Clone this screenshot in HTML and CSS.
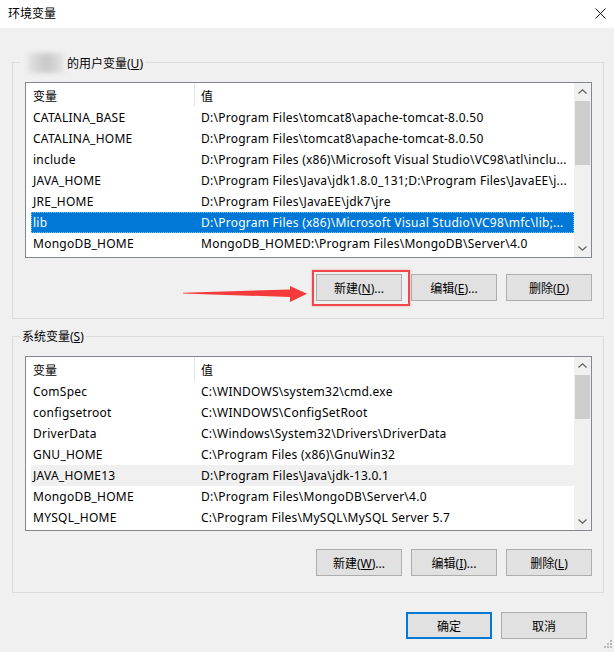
FILE: index.html
```html
<!DOCTYPE html>
<html lang="zh-CN">
<head>
    <meta charset="UTF-8">
    <title>环境变量</title>
    <link rel="stylesheet" href="styles.css">
</head>
<body>
    <div class="window">
        <div class="titlebar">
            <span class="title">环境变量</span>
            <svg class="close" width="11" height="11" viewBox="0 0 11 11">
                <path d="M0.5 0.5 L10.5 10.5 M10.5 0.5 L0.5 10.5" stroke="#111" stroke-width="1"/>
            </svg>
        </div>

        <fieldset class="group group-user">
            <legend><span class="blur-name"></span>的用户变量(<u>U</u>)</legend>
            <div class="list">
                <div class="list-body">
                    <div class="list-head">
                        <div class="head-name">变量</div>
                        <div class="head-value">值</div>
                    </div>
                    <div class="row"><span>CATALINA_BASE</span><span>D:\Program Files\tomcat8\apache-tomcat-8.0.50</span></div>
                    <div class="row"><span>CATALINA_HOME</span><span>D:\Program Files\tomcat8\apache-tomcat-8.0.50</span></div>
                    <div class="row"><span>include</span><span>D:\Program Files (x86)\Microsoft Visual Studio\VC98\atl\inclu...</span></div>
                    <div class="row"><span>JAVA_HOME</span><span>D:\Program Files\Java\jdk1.8.0_131;D:\Program Files\JavaEE\j...</span></div>
                    <div class="row"><span>JRE_HOME</span><span>D:\Program Files\JavaEE\jdk7\jre</span></div>
                    <div class="row selected"><span>lib</span><span>D:\Program Files (x86)\Microsoft Visual Studio\VC98\mfc\lib;...</span></div>
                    <div class="row"><span>MongoDB_HOME</span><span>MongoDB_HOMED:\Program Files\MongoDB\Server\4.0</span></div>
                </div>
                <div class="scrollbar">
                    <div class="arrow">
                        <svg width="9" height="5" viewBox="0 0 9 5"><path d="M0.5 4.5 L4.5 0.8 L8.5 4.5" fill="none" stroke="#606060" stroke-width="1.2"/></svg>
                    </div>
                    <div class="track"><div class="thumb thumb-user"></div></div>
                    <div class="arrow">
                        <svg width="9" height="5" viewBox="0 0 9 5"><path d="M0.5 0.5 L4.5 4.2 L8.5 0.5" fill="none" stroke="#606060" stroke-width="1.2"/></svg>
                    </div>
                </div>
            </div>
            <div class="btns">
                <span class="marked">
                    <button class="btn">新建(<u>N</u>)...</button>
                </span>
                <button class="btn">编辑(<u>E</u>)...</button>
                <button class="btn">删除(<u>D</u>)</button>
            </div>
            <svg class="pointer" width="130" height="22" viewBox="0 0 130 22">
                <polygon points="3,9.7 110,6.4 110,3 127,10.7 110,19 110,14 3,10.5" fill="#f43a3a"/>
            </svg>
        </fieldset>

        <fieldset class="group group-system">
            <legend>系统变量(<u>S</u>)</legend>
            <div class="list">
                <div class="list-body">
                    <div class="list-head">
                        <div class="head-name">变量</div>
                        <div class="head-value">值</div>
                    </div>
                    <div class="row"><span>ComSpec</span><span>C:\WINDOWS\system32\cmd.exe</span></div>
                    <div class="row"><span>configsetroot</span><span>C:\WINDOWS\ConfigSetRoot</span></div>
                    <div class="row"><span>DriverData</span><span>C:\Windows\System32\Drivers\DriverData</span></div>
                    <div class="row"><span>GNU_HOME</span><span>C:\Program Files (x86)\GnuWin32</span></div>
                    <div class="row hover"><span>JAVA_HOME13</span><span>D:\Program Files\Java\jdk-13.0.1</span></div>
                    <div class="row"><span>MongoDB_HOME</span><span>D:\Program Files\MongoDB\Server\4.0</span></div>
                    <div class="row"><span>MYSQL_HOME</span><span>C:\Program Files\MySQL\MySQL Server 5.7</span></div>
                </div>
                <div class="scrollbar">
                    <div class="arrow">
                        <svg width="9" height="5" viewBox="0 0 9 5"><path d="M0.5 4.5 L4.5 0.8 L8.5 4.5" fill="none" stroke="#606060" stroke-width="1.2"/></svg>
                    </div>
                    <div class="track"><div class="thumb thumb-system"></div></div>
                    <div class="arrow">
                        <svg width="9" height="5" viewBox="0 0 9 5"><path d="M0.5 0.5 L4.5 4.2 L8.5 0.5" fill="none" stroke="#606060" stroke-width="1.2"/></svg>
                    </div>
                </div>
            </div>
            <div class="btns">
                <button class="btn">新建(<u>W</u>)...</button>
                <button class="btn">编辑(<u>I</u>)...</button>
                <button class="btn">删除(<u>L</u>)</button>
            </div>
        </fieldset>

        <div class="footer">
            <button class="btn btn-default">确定</button>
            <button class="btn">取消</button>
        </div>

        <svg class="grip" width="12" height="12" viewBox="0 0 12 12">
            <rect x="9" y="1" width="2" height="2" fill="#b8b8b8"/>
            <rect x="6" y="4" width="2" height="2" fill="#b8b8b8"/>
            <rect x="9" y="4" width="2" height="2" fill="#b8b8b8"/>
            <rect x="3" y="7" width="2" height="2" fill="#b8b8b8"/>
            <rect x="6" y="7" width="2" height="2" fill="#b8b8b8"/>
            <rect x="9" y="7" width="2" height="2" fill="#b8b8b8"/>
        </svg>
    </div>
</body>
</html>
```

FILE: styles.css
```css
* {
    box-sizing: border-box;
}

body {
    margin: 0;
    font-family: "Noto Sans", "Noto Sans CJK SC", sans-serif;
    font-size: 12px;
    color: #000;
}

.window {
    position: relative;
    width: 614px;
    height: 652px;
    background: #f0f0f0;
    overflow: hidden;
}

.titlebar {
    display: flex;
    justify-content: space-between;
    align-items: center;
    height: 28px;
    padding: 0 8px 3px 8px;
    background: #fff;
}

.title {
    font-size: 12px;
}

.close {
    margin-top: 1px;
}

/* group boxes */
.group {
    position: relative;
    min-width: 0;
    margin: 26px 10px 0 12px;
    padding: 11px 11px 17px 12px;
    border: 1px solid #dcdcdc;
}

.group-system {
    margin-top: 9px;
    padding-top: 12px;
    padding-bottom: 16px;
}

.group legend {
    display: flex;
    align-items: center;
    margin-left: -5px;
    padding: 1px 2px 0 2px;
    line-height: 15px;
}

.blur-name {
    display: inline-block;
    width: 36px;
    height: 20px;
    margin: -2px 3px -2px 6px;
    background: linear-gradient(90deg, #e4e4e4 0%, #d2d2d2 30%, #cacaca 55%, #d8d8d8 80%, #e6e6e6 100%);
    filter: blur(2px);
}

/* list view */
.list {
    display: flex;
    height: 176px;
    border: 1px solid #828790;
    background: #fff;
}

.group-system .list {
    height: 175px;
}

.list-body {
    flex: 1;
    min-width: 0;
    overflow: hidden;
}

.list-head {
    display: flex;
    height: 24px;
    margin-left: 5px;
}

.head-name {
    display: flex;
    align-items: center;
    width: 164px;
    padding: 2px 0 0 2px;
    border-right: 1px solid #e5e5e5;
}

.head-value {
    display: flex;
    align-items: center;
    padding: 2px 0 0 6px;
}

.row {
    display: grid;
    grid-template-columns: 168px 1fr;
    height: 21px;
    margin-left: 5px;
    letter-spacing: 0.25px;
}

.row span {
    padding: 1px 2px 0 2px;
    line-height: 20px;
    white-space: nowrap;
    overflow: hidden;
    text-overflow: ellipsis;
}

.row.selected {
    background: #0078d7;
    color: #fff;
    outline: 1px dotted #8cc4ef;
    outline-offset: -1px;
}

.row.hover {
    background: #f0f0f0;
}

.scrollbar {
    display: flex;
    flex-direction: column;
    width: 17px;
    background: #f0f0f0;
}

.arrow {
    display: flex;
    align-items: center;
    justify-content: center;
    height: 17px;
}

.track {
    flex: 1;
    padding: 1px 1px 0 1px;
}

.thumb {
    background: #cdcdcd;
}

.thumb-user {
    height: 64px;
}

.thumb-system {
    height: 44px;
}

/* buttons */
.btns {
    display: flex;
    justify-content: flex-end;
    gap: 9px;
    margin-top: 16px;
}

.group-system .btns {
    margin-top: 18px;
}

.btn {
    width: 86px;
    height: 27px;
    padding: 0;
    border: 1px solid #adadad;
    background: #e1e1e1;
    font-family: inherit;
    font-size: 12px;
    color: #000;
}

.btn-default {
    border: 2px solid #0078d7;
}

.marked {
    position: relative;
    display: flex;
}

.marked::after {
    content: "";
    position: absolute;
    left: -4px;
    top: -4px;
    right: -8px;
    bottom: -5px;
    border: 2px solid #f04848;
    box-shadow: 0 0 2px rgba(240, 72, 72, 0.5);
}

.pointer {
    position: absolute;
    left: 167px;
    top: 212px;
}

.footer {
    display: flex;
    justify-content: flex-end;
    gap: 9px;
    margin-top: 19px;
    padding-right: 27px;
}

.grip {
    position: absolute;
    right: 1px;
    bottom: 1px;
}
```
